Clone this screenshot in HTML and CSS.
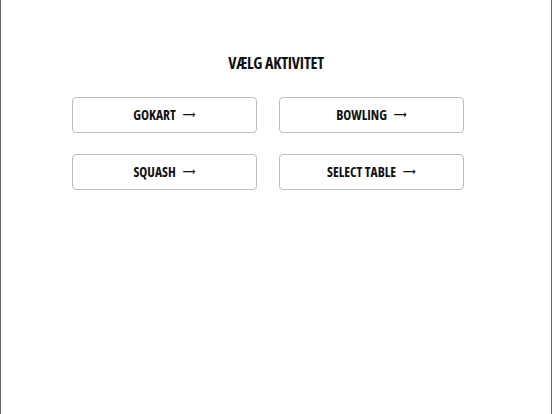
FILE: index.html
```html
<!DOCTYPE html>
<html>
<head>
<meta charset="utf-8">
<link rel="stylesheet" href="styles.css">
</head>
<body>
<div class="page">
  <h1 class="title">VÆLG AKTIVITET</h1>
  <div class="grid">
    <button class="btn">GOKART <span class="arrow">&#x27F6;</span></button>
    <button class="btn">BOWLING <span class="arrow">&#x27F6;</span></button>
    <button class="btn">SQUASH <span class="arrow">&#x27F6;</span></button>
    <button class="btn">SELECT TABLE <span class="arrow">&#x27F6;</span></button>
  </div>
</div>
</body>
</html>
```
FILE: styles.css
```css
html, body {
  margin: 0;
  padding: 0;
  background: #fff;
}
.page {
  box-sizing: border-box;
  width: 552px;
  height: 414px;
  border-left: 1px solid #666;
  border-right: 1px solid #666;
  font-family: "Open Sans", "Liberation Sans", sans-serif;
  font-stretch: condensed;
  color: #111;
  padding-top: 52px;
}
.title {
  margin: 0;
  text-align: center;
  font-size: 16px;
  font-weight: 700;
  line-height: 22px;
  letter-spacing: -0.2px;
}
.grid {
  display: grid;
  grid-template-columns: 185px 185px;
  column-gap: 22px;
  row-gap: 21px;
  margin: 23px 0 0 71px;
}
.btn {
  box-sizing: border-box;
  height: 36px;
  background: #fff;
  border: 1px solid #bdbdbd;
  border-radius: 4px;
  font-family: inherit;
  font-stretch: condensed;
  font-size: 13.5px;
  font-weight: 700;
  color: #111;
  padding: 0;
  display: flex;
  align-items: center;
  justify-content: center;
  gap: 7px;
}
.arrow {
  font-family: "DejaVu Sans", sans-serif;
  font-size: 10px;
  font-weight: 700;
  line-height: 1;
}
```
